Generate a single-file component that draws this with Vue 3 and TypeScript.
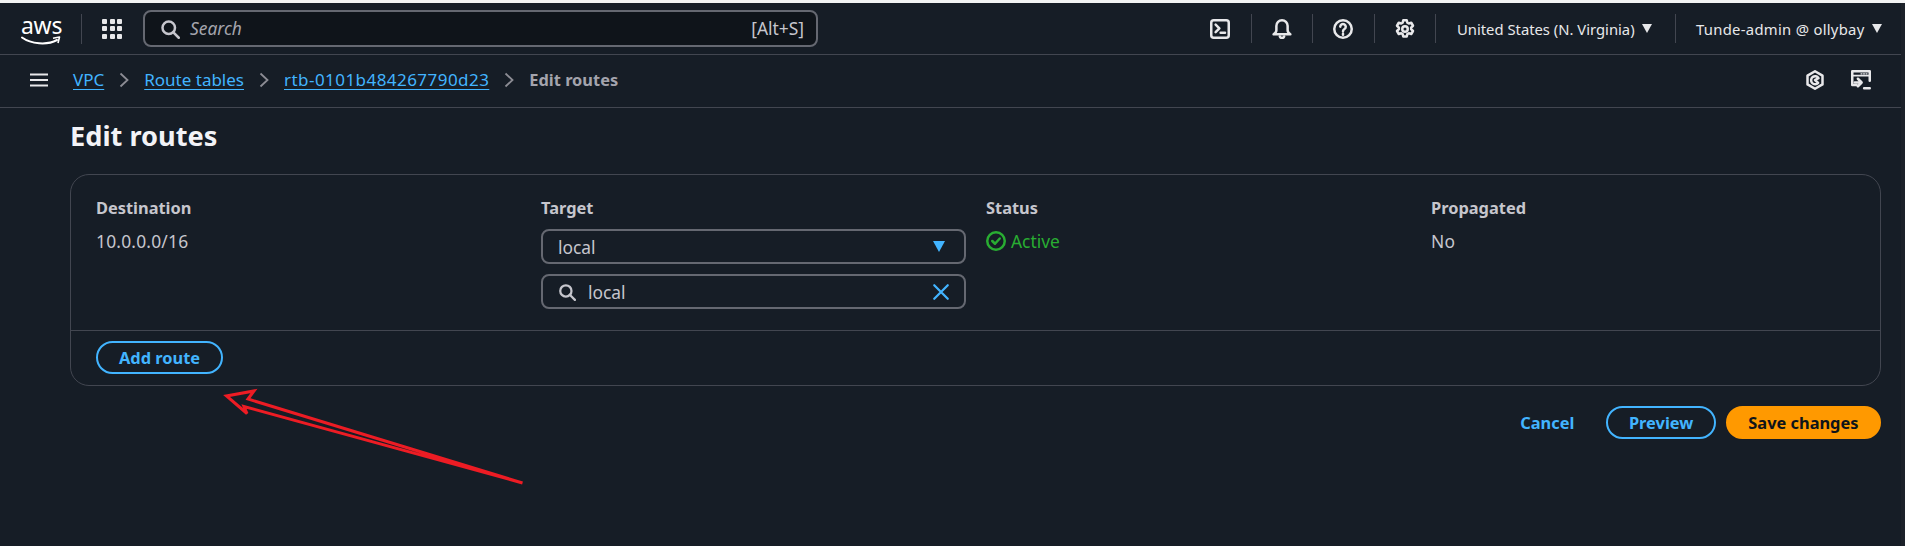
<script setup lang="ts">
interface RouteColumn {
  label: string
  value?: string
}

const columns: RouteColumn[] = [
  { label: 'Destination', value: '10.0.0.0/16' },
  { label: 'Target' },
  { label: 'Status' },
  { label: 'Propagated', value: 'No' },
]

const crumbs = ['VPC', 'Route tables', 'rtb-0101b484267790d23']
</script>

<template>
  <div class="page">
    <div class="main">
      <header class="topbar">
        <div class="logo">
          <span class="logo-text">aws</span>
          <svg class="logo-smile" viewBox="0 0 40 10" fill="none">
            <path d="M1 1.500C10 8 26 9.500 36 4" stroke="#fff" stroke-width="2" stroke-linecap="round" />
            <path d="M32 2.200 38.500 1 37 7" stroke="#fff" stroke-width="1.600" stroke-linejoin="round" />
          </svg>
        </div>
        <span class="logo-sep" />
        <div class="apps">
          <i v-for="n in 9" :key="n" />
        </div>
        <div class="search">
          <svg class="icon" viewBox="0 0 16 16"><circle cx="7" cy="7" r="5" /><path d="m15 15-4.500-4.500" /></svg>
          <span class="search-text">Search</span>
          <span class="search-key">[Alt+S]</span>
        </div>
        <div class="utilities">
          <div class="util">
            <svg class="icon" viewBox="0 0 16 16"><rect x="1" y="1" width="14" height="14" rx="2" /><path d="m4.500 4.500 3 3-3 3M8.500 11H12" /></svg>
          </div>
          <div class="util">
            <svg class="icon" viewBox="0 0 16 16"><path d="M8 1a4.500 4.500 0 0 0-4.500 4.500V9c0 1.500-1 2.500-2.200 3.200h13.400C13.500 11.500 12.500 10.500 12.500 9V5.500A4.500 4.500 0 0 0 8 1Z" /><path d="M6.300 14a1.800 1.800 0 0 0 3.400 0" /></svg>
          </div>
          <div class="util">
            <svg class="icon" viewBox="0 0 16 16"><circle cx="8" cy="8" r="7" /><path d="M5.800 6.100a2.200 2.200 0 1 1 3.400 1.900c-.8.500-1.200 1-1.200 1.800M8 11.800v.7" /></svg>
          </div>
          <div class="util">
            <svg class="icon" viewBox="0 0 16 16"><circle cx="8" cy="8" r="2.200" /><path d="M6.600 1h2.800l.5 2 1.100.6 2-.6 1.400 2.400-1.500 1.500v1.200l1.500 1.500-1.400 2.400-2-.6-1.100.6-.5 2H6.600l-.5-2-1.100-.6-2 .6-1.400-2.400 1.500-1.500V6.900L1.600 5.400 3 3l2 .6 1.100-.6.500-2Z" /></svg>
          </div>
          <div class="menu region">
            <span>United States (N. Virginia)</span><b class="caret" />
          </div>
          <div class="menu user">
            <span>Tunde-admin @ ollybay</span><b class="caret" />
          </div>
        </div>
      </header>

      <nav class="crumbbar">
        <svg class="icon burger" viewBox="0 0 18 14"><path d="M0 1.500h18M0 7h18M0 12.500h18" /></svg>
        <template v-for="crumb in crumbs" :key="crumb">
          <a class="crumb" :class="{ 'crumb-id': crumb.startsWith('rtb') }">{{ crumb }}</a>
          <svg class="chev" viewBox="0 0 10 16"><path d="m1.500 1.500 7 6.500-7 6.500" /></svg>
        </template>
        <span class="crumb-current">Edit routes</span>
        <div class="crumb-tools">
          <svg class="icon" viewBox="0 0 16 16"><path d="M8 1 14 4.500v7L8 15l-6-3.500v-7L8 1Z" /><path d="M10.500 10.300A3.200 3.200 0 1 1 10.800 6.500L8 8l2.500 2.300Z" /></svg>
          <svg class="icon" viewBox="0 0 16 16"><path d="M4.500 12H1V1h14v7.500" /><path d="M1 4.500h14" stroke-width="1.500" /><path d="M8 3h.8M10 3h.8M12 3h.8" stroke-width="1" /><path d="m5.500 7 3 3-3 3M3 10h5M10.500 14.500H15" /></svg>
        </div>
      </nav>

      <section class="content">
        <h1 class="title">Edit routes</h1>
        <div class="card">
          <div class="routes">
            <div v-for="col in columns" :key="col.label" class="col">
              <div class="col-label">{{ col.label }}</div>
              <div v-if="col.value" class="col-value">{{ col.value }}</div>
              <template v-else-if="col.label === 'Target'">
                <div class="field">
                  <span>local</span>
                  <b class="field-caret" />
                </div>
                <div class="field">
                  <svg class="icon field-search" viewBox="0 0 16 16"><circle cx="7" cy="7" r="5" /><path d="m15 15-4.500-4.500" /></svg>
                  <span>local</span>
                  <svg class="icon field-clear" viewBox="0 0 16 16"><path d="m2 2 12 12M14 2 2 14" /></svg>
                </div>
              </template>
              <div v-else class="col-value status">
                <svg class="icon" viewBox="0 0 16 16"><circle cx="8" cy="8" r="7" /><path d="m5 8 2.200 2.200L11 6" /></svg>
                Active
              </div>
            </div>
          </div>
          <div class="card-foot">
            <button class="btn">Add route</button>
          </div>
        </div>
        <div class="actions">
          <a class="cancel">Cancel</a>
          <button class="btn preview">Preview</button>
          <button class="btn primary">Save changes</button>
        </div>
      </section>
    </div>
    <div class="scrollbar" />

    <!-- red annotation drawn over the screenshot -->
    <svg class="arrow" viewBox="0 0 1905 546" fill="none">
      <path d="M522.500 483 248 399 254 391 226.500 396 247 413.500 244 406.500 522.500 483Z" stroke="#ed1c24" stroke-width="3" stroke-linejoin="miter" />
    </svg>
  </div>
</template>

<style>
html,
body {
  margin: 0;
  background: #161d26;
}
</style>

<style scoped>
.page {
  position: relative;
  display: flex;
  box-sizing: border-box;
  width: 1905px;
  height: 546px;
  padding-top: 3px;
  overflow: hidden;
  background: #f2f3f3;
  font-family: "Noto Sans", sans-serif;
  font-size: 17.400px;
  color: #c6c6cd;
}

.main {
  display: flex;
  flex: 1;
  flex-direction: column;
  min-width: 0;
  background: #161d26;
}

.scrollbar {
  width: 4px;
  background: #1c2129;
}

.icon {
  flex: none;
  width: 20px;
  height: 20px;
  fill: none;
  stroke: currentColor;
  stroke-width: 2;
  stroke-linejoin: round;
  stroke-linecap: round;
}

.topbar {
  display: flex;
  align-items: center;
  box-sizing: border-box;
  height: 52px;
  padding-left: 21px;
  border-bottom: 1px solid #424650;
  color: #e8e8ea;
}

.logo {
  position: relative;
  width: 40px;
  height: 30px;
}

.logo-text {
  display: block;
  font-size: 23px;
  line-height: 22px;
  color: #fff;
  letter-spacing: -0.300px;
}

.logo-smile {
  display: block;
  width: 40px;
  height: 10px;
}

.logo-sep {
  width: 1px;
  height: 30px;
  margin: 0 20px;
  background: #424650;
}

.apps {
  display: grid;
  grid-template-columns: repeat(3, 5px);
  gap: 2.500px;
}

.apps i {
  width: 5px;
  height: 5px;
  background: #e8e8ea;
  border-radius: 1px;
}

.search {
  display: flex;
  align-items: center;
  box-sizing: border-box;
  width: 675px;
  height: 37px;
  margin-left: 21px;
  padding: 0 12px 0 15px;
  background: #0f141a;
  border: 2px solid #656871;
  border-radius: 8px;
}

.search .icon {
  color: #c6c6cd;
}

.search-text {
  margin: 0 0 2px 10px;
  font-style: italic;
  color: #a4a4ad;
}

.search-key {
  margin: 0 0 2px auto;
  color: #c6c6cd;
}

.utilities {
  display: flex;
  align-items: center;
  margin-left: auto;
}

.util {
  display: flex;
  align-items: center;
  justify-content: center;
  box-sizing: border-box;
  width: 61.500px;
  height: 29px;
  border-right: 1px solid #424650;
}

.menu {
  display: flex;
  align-items: center;
  box-sizing: border-box;
  height: 29px;
  font-size: 14.800px;
  white-space: nowrap;
}

.region {
  width: 240px;
  padding-left: 21px;
  border-right: 1px solid #424650;
}

.user {
  width: 225px;
  padding-left: 20px;
}

.user span {
  letter-spacing: 0.300px;
}

.caret {
  width: 0;
  height: 0;
  margin-left: 7px;
  border-top: 9px solid #e8e8ea;
  border-right: 5px solid transparent;
  border-left: 5px solid transparent;
}

.crumbbar {
  display: flex;
  align-items: center;
  box-sizing: border-box;
  height: 53px;
  padding: 0 0 2px 30px;
  border-bottom: 1px solid #424650;
}

.burger {
  width: 18px;
  height: 14px;
  margin-right: 25px;
  color: #e8e8ea;
}

.crumb {
  margin-bottom: 2px;
  font-size: 17px;
  color: #42b4ff;
  text-decoration: underline;
  text-underline-offset: 3px;
}

.crumb-id {
  letter-spacing: 0.450px;
}

.chev {
  width: 10px;
  height: 16px;
  margin: 0 15px;
  fill: none;
  stroke: #8c8c94;
  stroke-width: 1.800;
}

.crumb-current {
  margin-bottom: 2px;
  font-size: 16.400px;
  font-weight: 700;
  color: #a4a4ad;
}

.crumb-tools {
  display: flex;
  gap: 26px;
  margin-left: auto;
  padding-right: 30px;
  color: #e8e8ea;
}

.content {
  padding: 0 20px 0 70px;
}

.title {
  margin: 12px 0 22px;
  font-size: 27.200px;
  line-height: 32px;
  font-weight: 700;
  color: #f3f3f7;
}

.card {
  border: 1px solid #424650;
  border-radius: 19px;
}

.routes {
  display: grid;
  grid-template-columns: repeat(4, 445px);
  height: 156px;
  padding: 22px 0 0 25px;
  box-sizing: border-box;
  border-bottom: 1px solid #424650;
}

.col-label {
  margin-bottom: 1px;
  font-size: 16.400px;
  font-weight: 700;
  line-height: 22px;
}

.col-value {
  margin-top: 11px;
  line-height: 22px;
  letter-spacing: 0.200px;
}

.status {
  display: flex;
  align-items: center;
  gap: 5px;
  letter-spacing: 0;
  color: #29ad32;
}

.field {
  display: flex;
  align-items: center;
  box-sizing: border-box;
  width: 425px;
  height: 35px;
  margin-top: 10px;
  padding: 0 14px 0 15px;
  border: 2px solid #656871;
  border-radius: 8px;
}

.field-caret {
  width: 0;
  height: 0;
  margin-left: auto;
  margin-right: 5px;
  border-top: 11px solid #42b4ff;
  border-right: 6.500px solid transparent;
  border-left: 6.500px solid transparent;
}

.field-search {
  width: 18px;
  height: 18px;
  margin-right: 12px;
  color: #c6c6cd;
}

.field-clear {
  width: 18px;
  height: 18px;
  margin-left: auto;
  color: #42b4ff;
}

.card-foot {
  padding: 10px 0 11px 25px;
}

.btn {
  box-sizing: border-box;
  height: 33px;
  padding: 0 21px;
  background: transparent;
  border: 2px solid #42b4ff;
  border-radius: 20px;
  font: inherit;
  font-size: 16.400px;
  font-weight: 700;
  color: #42b4ff;
}

.actions {
  display: flex;
  align-items: center;
  justify-content: flex-end;
  gap: 10px;
  margin-top: 20px;
}

.cancel {
  margin-right: 22px;
  font-size: 16.400px;
  font-weight: 700;
  color: #42b4ff;
}

.preview,
.primary {
  padding: 0 20.500px;
}

.primary {
  background: #ff9900;
  border-color: #ff9900;
  color: #0f141a;
}

.arrow {
  position: absolute;
  top: 0;
  left: 0;
  width: 1905px;
  height: 546px;
  pointer-events: none;
}
</style>
